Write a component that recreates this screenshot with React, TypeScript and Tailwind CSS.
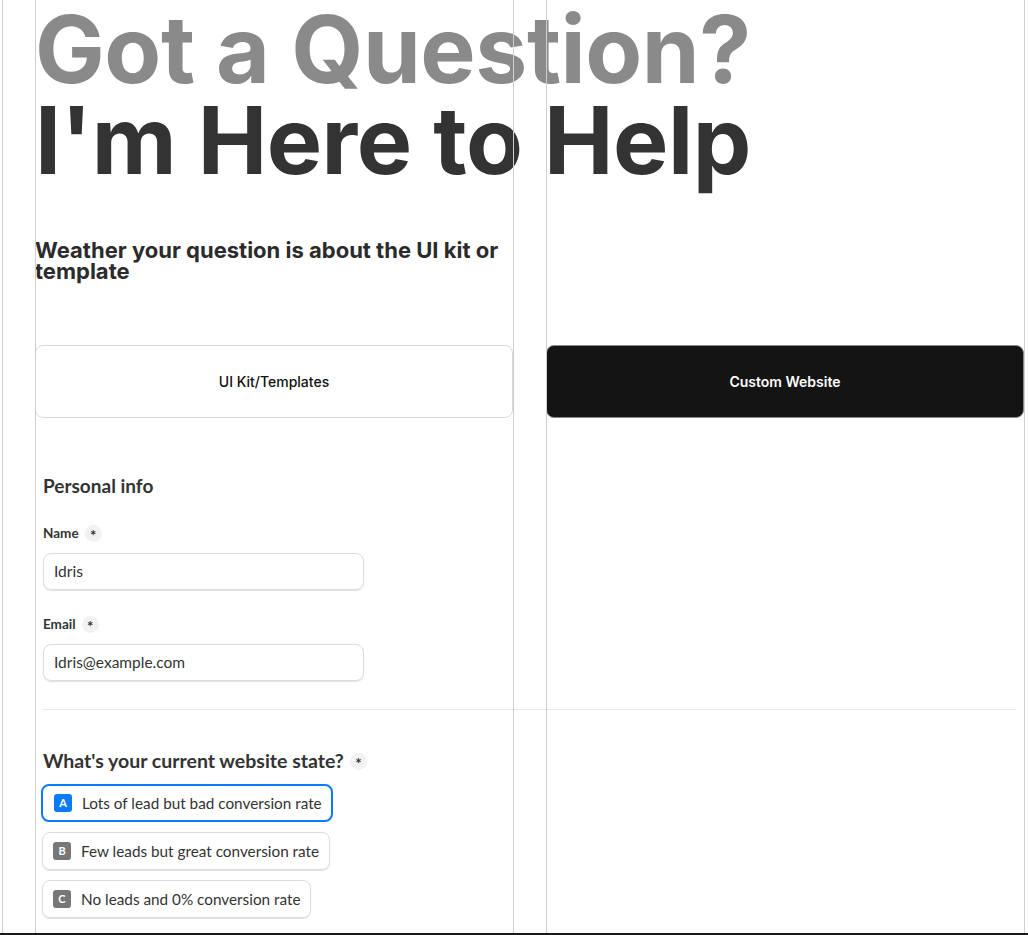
import React from 'react'

const grotesk = { fontFamily: 'Inter, "Liberation Sans", sans-serif' }

function Req() {
  return (
    <span className="ml-[6px] inline-flex h-[17px] w-[17px] items-center justify-center rounded-full bg-[#f2f2f2] pt-[5px] text-[15px] leading-none font-bold text-[#333]">
      *
    </span>
  )
}

function Field({ label, value }: { label: string; value: string }) {
  return (
    <div>
      <div className="flex h-[20px] items-center text-[13.5px] font-bold text-[#333]">
        {label}
        <Req />
      </div>
      <div className="mt-[10px] flex h-[37px] w-[321px] items-center rounded-[8px] border border-[#dcdcdc] px-[10px] text-[15.5px] text-[#333] shadow-[0_1px_1px_rgba(0,0,0,0.12)]">
        {value}
      </div>
    </div>
  )
}

const options = [
  { key: 'A', label: 'Lots of lead but bad conversion rate', active: true },
  { key: 'B', label: 'Few leads but great conversion rate', active: false },
  { key: 'C', label: 'No leads and 0% conversion rate', active: false },
]

export default function App() {
  return (
    <div className="relative h-[935px] w-[1028px] overflow-hidden bg-white" style={{ fontFamily: 'Lato, "Open Sans", sans-serif' }}>
      {/* grid overlay */}
      <div className="pointer-events-none absolute inset-0 z-10">
        <div className="absolute top-0 bottom-0 left-[2px] w-px bg-[#cfcfcf]" />
        <div className="absolute top-0 bottom-0 left-[35px] w-px bg-[#cfcfcf]" />
        <div className="absolute top-0 bottom-0 left-[513px] w-px bg-[#cfcfcf]" />
        <div className="absolute top-0 bottom-0 left-[546px] w-px bg-[#cfcfcf]" />
        <div className="absolute top-0 bottom-0 left-[1024px] w-px bg-[#cfcfcf]" />
        <div className="absolute right-0 bottom-0 left-0 h-[2px] bg-[#1a1a1a]" />
      </div>

      <div className="pl-[35px]">
        <h1 className="pt-[4px] text-[93px] leading-[91px] font-bold tracking-[-0.005em]" style={grotesk}>
          <span className="block text-[#8a8a8a]">Got a Question?</span>
          <span className="block text-[#333333]">I'm Here to Help</span>
        </h1>

        <p className="mt-[54px] w-[478px] text-[22px] leading-[21px] font-bold text-[#2b2b2b]" style={grotesk}>
          Weather your question is about the UI kit or template
        </p>

        <div className="mt-[63px] grid grid-cols-[478px_478px] gap-[33px]" style={grotesk}>
          <div className="flex h-[73px] items-center justify-center rounded-[8px] border border-[#dadada] bg-white text-[14px] font-medium text-[#111]">
            UI Kit/Templates
          </div>
          <div className="flex h-[73px] items-center justify-center rounded-[8px] border border-[#888] bg-[#141414] text-[14px] font-semibold text-white">
            Custom Website
          </div>
        </div>

        <div className="pr-[8px] pl-[7px]">
          <h2 className="mt-[55px] pl-px text-[19px] leading-[26px] font-bold text-[#333]">Personal info</h2>

          <div className="mt-[24px] flex flex-col gap-[24px] pl-px">
            <Field label="Name" value="Idris" />
            <Field label="Email" value="Idris@example.com" />
          </div>

          <div className="mt-[28px] ml-px h-px w-[973px] bg-[#e8e8e8]" />

          <h2 className="mt-[38px] flex items-center pl-px text-[19.5px] leading-[26px] font-bold text-[#333]">
            What's your current website state?
            <Req />
          </h2>

          <div className="mt-[10px] flex flex-col items-start gap-[10px]">
            {options.map((o) => (
              <div
                key={o.key}
                className={
                  o.active
                    ? '-ml-px flex h-[38px] items-center gap-[10px] rounded-[8px] border-2 border-[#0a7cf7] pr-[9px] pl-[11px] text-[15.3px] text-[#333]'
                    : 'flex h-[38px] items-center gap-[10px] rounded-[8px] border border-[#dcdcdc] pr-[10px] pl-[10px] text-[15.3px] text-[#333] shadow-[0_1px_1px_rgba(0,0,0,0.12)]'
                }
              >
                <span
                  className={
                    o.active
                      ? 'flex h-[18px] w-[18px] items-center justify-center rounded-[3px] bg-[#0a7cf7] text-[11px] font-bold text-white'
                      : 'flex h-[18px] w-[18px] items-center justify-center rounded-[3px] bg-[#777] text-[11px] font-bold text-white'
                  }
                >
                  {o.key}
                </span>
                {o.label}
              </div>
            ))}
          </div>
        </div>
      </div>
    </div>
  )
}
